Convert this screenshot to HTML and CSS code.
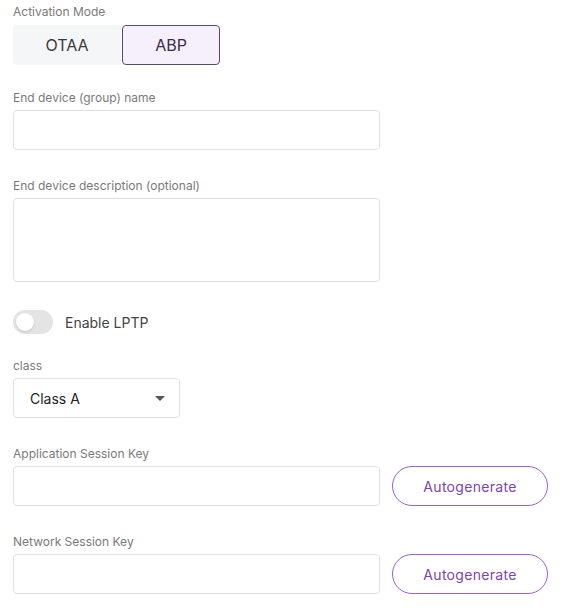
FILE: index.html
```html
<!DOCTYPE html>
<html lang="en">
<head>
  <meta charset="UTF-8">
  <meta name="viewport" content="width=device-width, initial-scale=1.0">
  <title>Add end device</title>
  <link rel="stylesheet" href="styles.css">
</head>
<body>
  <form class="device-form">
    <div class="field field-mode">
      <label>Activation Mode</label>
      <div class="segmented">
        <button type="button" class="seg seg-otaa">OTAA</button>
        <button type="button" class="seg seg-abp active">ABP</button>
      </div>
    </div>
    <div class="field">
      <label>End device (group) name</label>
      <input type="text" class="text-input">
    </div>
    <div class="field">
      <label>End device description (optional)</label>
      <textarea class="text-area"></textarea>
    </div>
    <div class="toggle-row">
      <span class="toggle"><span class="knob"></span></span>
      <span class="toggle-label">Enable LPTP</span>
    </div>
    <div class="field">
      <label>class</label>
      <div class="select">
        <span>Class A</span>
        <span class="caret"></span>
      </div>
    </div>
    <div class="field">
      <label>Application Session Key</label>
      <div class="key-row">
        <input type="text" class="text-input">
        <button type="button" class="btn-auto">Autogenerate</button>
      </div>
    </div>
    <div class="field">
      <label>Network Session Key</label>
      <div class="key-row">
        <input type="text" class="text-input">
        <button type="button" class="btn-auto">Autogenerate</button>
      </div>
    </div>
  </form>
</body>
</html>
```
FILE: styles.css
```css
:root{--label:#7a7a7a;--border:#e0e0e0;--purple:#7b45b0;--purple-border:#9a5fcf;--text:#333}
body{margin:0;font-family:Inter,'Noto Sans',sans-serif;color:var(--text);background:#fff}
.device-form{padding:4px 13px 0;width:535px}
.field{display:flex;flex-direction:column;margin-bottom:28px}
.field label{font-size:12px;line-height:16px;color:var(--label);margin-bottom:4px}
.field-mode{margin-bottom:25px}
.field-mode label{margin-bottom:5px}
.segmented{display:flex;gap:1px}
.seg{height:40px;font-family:inherit;font-size:16px;border-radius:4px;cursor:pointer}
.seg-otaa{width:108px;background:#f5f6f7;border:none;color:#3a3a3a;border-radius:4px 0 0 4px}
.seg-abp{width:98px;background:#f6f0fd;border:1px solid #5e4673;color:#3b2b4a}
.text-input{box-sizing:border-box;width:367px;height:40px;border:1px solid var(--border);border-radius:4px;padding:0 12px;font-family:inherit;font-size:14px}
.text-area{box-sizing:border-box;width:367px;height:84px;border:1px solid var(--border);border-radius:4px;padding:8px 12px;resize:none;font-family:inherit}
.toggle-row{display:flex;align-items:center;gap:12px;margin:0 0 24px}
.toggle{width:40px;height:24px;border-radius:12px;background:#e4e4e4;display:flex;align-items:center;padding:0 3px;box-sizing:border-box}
.knob{width:18px;height:18px;border-radius:50%;background:#fff;box-shadow:0 1px 2px rgba(0,0,0,.15)}
.toggle-label{font-size:14px;color:#444}
.select{box-sizing:border-box;width:167px;height:40px;border:1px solid var(--border);border-radius:4px;display:flex;align-items:center;justify-content:space-between;padding:0 14px 0 16px;font-size:14px;color:#222}
.caret{width:0;height:0;border-left:5px solid transparent;border-right:5px solid transparent;border-top:5px solid #555}
.key-row{display:flex;gap:12px}
.btn-auto{width:156px;height:40px;border:1px solid var(--purple-border);border-radius:20px;background:#fff;color:var(--purple);font-family:inherit;font-size:14px;letter-spacing:.3px;cursor:pointer}
```
